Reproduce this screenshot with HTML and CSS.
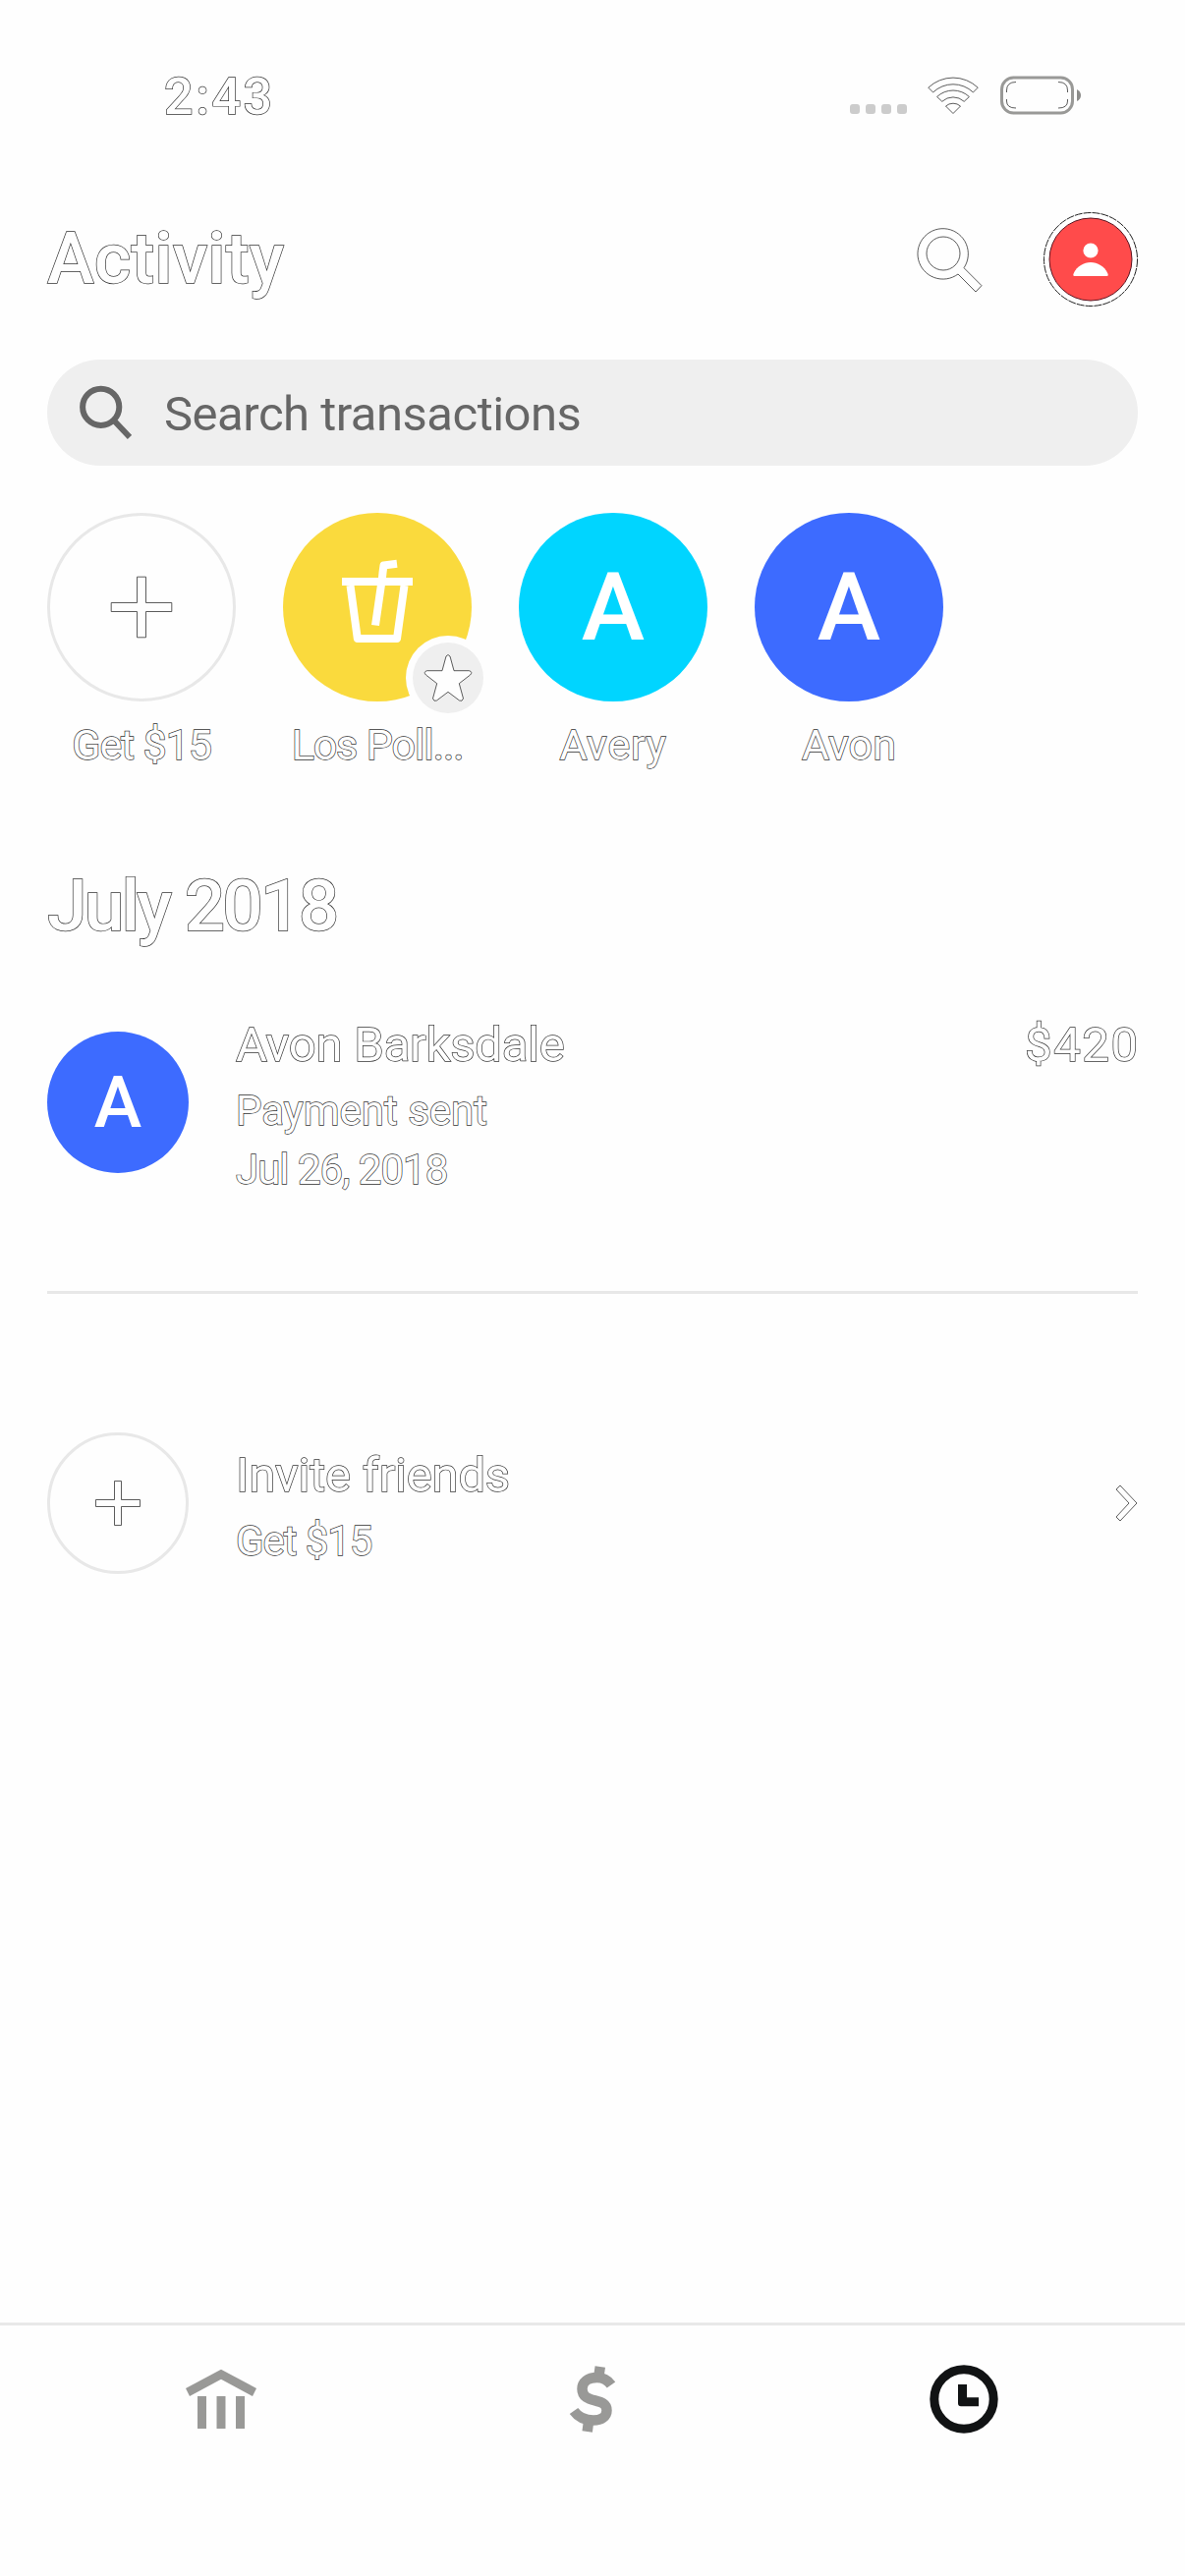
FILE: index.html
```html
<!DOCTYPE html>
<html lang="en">
<head>
<meta charset="utf-8">
<title>Activity</title>
<link rel="stylesheet" href="styles.css">
</head>
<body>
<div class="statusbar">
  <span class="time outlined">2:43</span>
  <div class="status-icons">
    <div class="signal"><i></i><i></i><i></i><i></i></div>
    <svg class="wifi" width="54" height="40" viewBox="0 0 54 40">
      <g class="hairline">
        <path d="M1.8 12.2A36.5 36.5 0 0 1 52.2 12.2L47.4 17A29.5 29.5 0 0 0 6.6 17Z"/>
        <path d="M10.6 21.5A24 24 0 0 1 43.4 21.5L38.2 26.3A16.5 16.5 0 0 0 15.8 26.3Z"/>
        <path d="M19.5 31A11.5 11.5 0 0 1 34.5 31L27 38.5Z"/>
      </g>
    </svg>
    <svg class="battery" width="83" height="40" viewBox="0 0 83 40">
      <rect x="1.5" y="2" width="72" height="36" rx="12" fill="none" stroke="#999997" stroke-width="3"/>
      <path class="hairline" d="M6.5 17v-2Q6.500 6.500 16 6.500M59 6.500Q68.500 6.500 68.500 15v2M68.500 24v2Q68.500 33 59 33M16 33Q6.500 33 6.500 26v-2"/>
      <path d="M78 14Q82 16 82 20T78 26Z" fill="#8c8c8a"/>
    </svg>
  </div>
</div>

<header class="header">
  <h1 class="title outlined">Activity</h1>
  <div class="actions">
    <svg width="76" height="72" viewBox="0 0 76 72"><g class="hairline"><path d="M57 44.700L75 62.700L69 69L51 51A25.700 25.700 0 1 1 57 44.700Z"/><circle cx="36" cy="30" r="17"/></g></svg>
    <svg width="96" height="96" viewBox="0 0 96 96">
      <circle cx="48" cy="48" r="47.500" fill="#fff" stroke="#222" stroke-width="1" stroke-dasharray="8 1"/>
      <circle cx="48" cy="48" r="42" fill="#ff4b4b" stroke="#5a1420" stroke-width="1"/>
      <circle cx="48" cy="39" r="7.600" fill="#fff"/>
      <path d="M31.500 65Q29.500 65 30.800 62C34 55 41 51 48 51S62 55 65.200 62Q66.500 65 64.500 65Z" fill="#fff"/>
    </svg>
  </div>
</header>

<main class="content">
  <div class="search">
    <svg width="56" height="56" viewBox="0 0 56 56" fill="none" stroke="#666" stroke-width="6"><circle cx="24.700" cy="22.300" r="18.600"/><path d="M37.500 35.500L54 53"/></svg>
    <span class="placeholder">Search transactions</span>
  </div>

  <div class="contacts">
    <div class="contact">
      <div class="avatar ring"><svg width="64" height="64" viewBox="0 0 64 64"><path class="hairline" d="M27.500 1.200h9v26.300h26.300v9h-26.300v26.300h-9v-26.300h-26.300v-9h26.300z"/></svg></div>
      <span class="name outlined tight">Get $15</span>
    </div>
    <div class="contact">
      <div class="avatar yellow">
        <svg width="192" height="192" viewBox="0 0 192 192" fill="none" stroke="#fff" stroke-width="8" stroke-linejoin="round"><path d="M60 70H132M68.500 74L75.800 128H116L123.500 74M116 51.800L102.500 53.500Q101.500 60 101 66L94 114.500"/></svg>
        <svg class="badge" width="86" height="86" viewBox="125 125 86 86"><circle cx="168" cy="168" r="43" fill="#fefefe"/><circle cx="168" cy="168" r="36" fill="#efefef"/><path class="hairline" stroke-linejoin="round" d="M166 146Q168 143 170 146L174 160.700L189.500 160.700Q193.500 162 190.500 165L179.300 173.700L183.500 189Q182.500 192.500 179.500 191L168 182.300L156.500 191Q153.500 192.500 152.500 189L156.700 173.700L145.500 165Q142.500 162 146.500 160.700L162 160.700Z"/></svg>
      </div>
      <span class="name outlined tight">Los Poll...</span>
    </div>
    <div class="contact">
      <div class="avatar cyan">A</div>
      <span class="name outlined loose">Avery</span>
    </div>
    <div class="contact">
      <div class="avatar blue">A</div>
      <span class="name outlined">Avon</span>
    </div>
  </div>

  <h2 class="month outlined">July 2018</h2>

  <div class="row">
    <div class="avatar small blue">A</div>
    <div class="details">
      <span class="primary outlined">Avon Barksdale</span>
      <span class="secondary outlined">Payment sent</span>
      <span class="secondary date outlined">Jul 26, 2018</span>
    </div>
    <span class="amount outlined">$420</span>
  </div>

  <div class="divider"></div>

  <div class="row invite">
    <div class="avatar small ring"><svg width="48" height="48" viewBox="0 0 48 48"><path class="hairline" d="M20.500 1.500h7v19h19v7h-19v19h-7v-19h-19v-7h19z"/></svg></div>
    <div class="details">
      <span class="primary outlined">Invite friends</span>
      <span class="secondary tight outlined">Get $15</span>
    </div>
    <svg class="chevron" width="24" height="40" viewBox="0 0 24 40"><path class="hairline" d="M2 6L6 2L23 20L6 38L2 34L15 20Z"/></svg>
  </div>
</main>

<nav class="tabs">
  <svg width="72" height="72" viewBox="0 0 72 72" fill="#999997"><path d="M36 5.700L72 25L68 33L36 15.700L4 33L0 25Z"/><path d="M12 33h9v33h-9zM31.500 33h9v33h-9zM51 33h9v33h-9z"/></svg>
  <svg width="72" height="72" viewBox="0 0 72 72" fill="none" stroke="#999997" stroke-width="10.500"><path d="M55 21.500C51 16 46 14 40.500 14C31 14 25.500 19 25.500 25.500C25.500 42 50.500 33 50.500 47.500C50.500 53.500 45 57.500 37 57.500C28 57.500 22 55 17 48"/><path d="M43.800 3L42.500 12M32 59L30.700 69"/></svg>
  <svg width="72" height="72" viewBox="0 0 72 72"><circle cx="36" cy="36" r="30.200" fill="none" stroke="#111314" stroke-width="9"/><path d="M30 21h9v13.300h12v9h-18q-3 0-3-3z" fill="#111314"/></svg>
</nav>
</body>
</html>
```
FILE: styles.css
```css
* { box-sizing: border-box; }

body {
  margin: 0;
  width: 1206px;
  min-height: 2622px;
  display: flex;
  flex-direction: column;
  background: #fefefe;
  font-family: Roboto, "Liberation Sans", sans-serif;
}

svg { display: block; flex: none; }

h1, h2 { margin: 0; font-weight: 500; }

/* white glyphs with a thin dark contour */
.outlined {
  color: #fefefe;
  -webkit-text-stroke: 1.4px #333;
  paint-order: stroke fill;
  white-space: nowrap;
}

.hairline { fill: #fefefe; stroke: #333; stroke-width: 0.8; }

.statusbar {
  height: 198px;
  padding: 68px 105px 0 167px;
  display: flex;
  justify-content: space-between;
  align-items: flex-start;
}

.time { font-size: 52px; line-height: 62px; font-weight: 500; letter-spacing: 2.6px; }

.status-icons { display: flex; padding-top: 9px; }

.signal { display: flex; gap: 6px; padding-top: 29px; margin-right: 20px; }
.signal i { width: 10px; height: 10px; border-radius: 3px; background: #ccc; }

.wifi { margin-right: 21px; }

.header {
  height: 132px;
  padding: 0 48px;
  display: flex;
  justify-content: space-between;
  align-items: center;
}

.title { font-size: 72px; line-height: 84px; }

.actions { display: flex; align-items: center; gap: 62px; }

.content { padding: 36px 48px 0; }

.search {
  height: 108px;
  border-radius: 54px;
  background: #efefef;
  display: flex;
  align-items: center;
  padding: 0 30px;
  gap: 33px;
}

.placeholder {
  padding-top: 4px;
  font-size: 49px;
  line-height: 60px;
  letter-spacing: -0.5px;
  color: #666;
  white-space: nowrap;
}

.contacts { display: flex; gap: 48px; margin-top: 48px; }

.contact { width: 192px; display: flex; flex-direction: column; align-items: center; gap: 19px; }

.avatar {
  position: relative;
  flex: none;
  width: 192px;
  height: 192px;
  border-radius: 50%;
  display: flex;
  align-items: center;
  justify-content: center;
  color: #fff;
  font-size: 97px;
  font-weight: 500;
}
.avatar.small { width: 144px; height: 144px; font-size: 73px; }

.ring { border: 3px solid #e8e8e8; }
.yellow { background: #fada3d; }
.cyan { background: #00d5ff; }
.blue { background: #3d6bff; }

.badge { position: absolute; left: 125px; top: 125px; }

.name { font-size: 43px; line-height: 50px; }

.month { font-size: 73px; line-height: 84px; margin-top: 97px; letter-spacing: -2.8px; }

.row { display: flex; align-items: flex-start; margin-top: 71px; }
.row > .avatar { margin-top: 15px; }

.details { flex: 1; display: flex; flex-direction: column; align-items: flex-start; padding-left: 48px; }

.primary, .amount { font-size: 49px; line-height: 58px; }
.primary { letter-spacing: -0.2px; }
.amount { letter-spacing: 1.6px; margin-right: -1.6px; }
.secondary { font-size: 42px; line-height: 60px; }
.primary + .secondary { margin-top: 8px; }
.date { letter-spacing: -1px; }
.tight { letter-spacing: -1.1px; }
.loose { letter-spacing: 0.7px; }

.divider { height: 3px; margin-top: 93px; background: #e8e8e8; }

.row.invite { margin-top: 141px; }
.row.invite > .avatar { margin-top: 0; }
.invite .details { padding-top: 15px; }

.chevron { margin-top: 52px; }

.tabs {
  margin-top: auto;
  height: 258px;
  border-top: 3px solid #e8e8e8;
  padding: 39px 36px 0;
  display: grid;
  grid-template-columns: repeat(3, 378px);
  justify-items: center;
  align-items: start;
}
```
